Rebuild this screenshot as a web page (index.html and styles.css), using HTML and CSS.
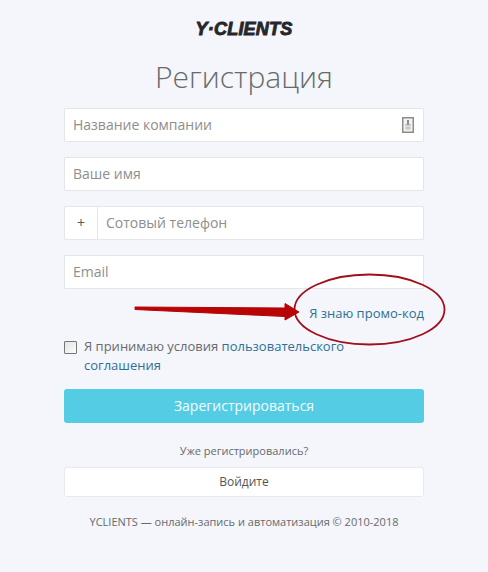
FILE: index.html
```html
<!DOCTYPE html>
<html lang="ru">
<head>
<meta charset="utf-8">
<title>Регистрация</title>
<link rel="stylesheet" href="styles.css">
</head>
<body>
<main class="page">
  <div class="logo">Y·CLIENTS</div>
  <h1 class="title">Регистрация</h1>
  <form class="form">
    <div class="field">
      <span class="placeholder">Название компании</span>
      <svg class="field-icon" width="12" height="16" viewBox="0 0 12 16" aria-hidden="true">
        <rect x="0.75" y="0.75" width="10.5" height="14.5" fill="#f2f2f2" stroke="#8c8c8c" stroke-width="1.5"/>
        <rect x="5" y="3" width="2" height="4" fill="#8c8c8c"/>
        <rect x="3.500" y="7" width="5" height="1.500" fill="#a8a8a8"/>
        <rect x="3.500" y="9.500" width="5" height="3" fill="#c8c8c8"/>
      </svg>
    </div>
    <div class="field"><span class="placeholder">Ваше имя</span></div>
    <div class="field phone">
      <span class="prefix">+</span>
      <span class="placeholder">Сотовый телефон</span>
    </div>
    <div class="field"><span class="placeholder">Email</span></div>
  </form>
  <div class="promo"><a class="link" href="#">Я знаю промо-код</a></div>
  <div class="terms">
    <span class="checkbox"></span>
    <p class="terms-text">Я принимаю условия <a class="link" href="#">пользовательского соглашения</a></p>
  </div>
  <div class="submit">Зарегистрироваться</div>
  <p class="already">Уже регистрировались?</p>
  <div class="login">Войдите</div>
  <p class="copyright">YCLIENTS — онлайн-запись и автоматизация © 2010-2018</p>

  <svg class="annotation" width="488" height="572" viewBox="0 0 488 572" aria-hidden="true">
    <ellipse cx="369.500" cy="309.500" rx="75" ry="35" fill="none" stroke="#a0101a" stroke-width="1.800"/>
    <path d="M135 307 L135 309.500 L285 316.500 L285 320 L299 312 L285 303.500 L285 308 Z" fill="#b80404" stroke="#b80404" stroke-width="1" stroke-linejoin="round"/>
  </svg>
</main>
</body>
</html>
```
FILE: styles.css
```css
* { box-sizing: border-box; }
html, body { margin: 0; padding: 0; }
body {
  background: #f4f6fb;
  font-family: "Open Sans", sans-serif;
  color: #676a6c;
  width: 488px;
  height: 572px;
  overflow: hidden;
}
.page {
  position: relative;
  width: 488px;
  height: 572px;
  padding: 18px 64px 0;
}
.logo {
  height: 22px;
  line-height: 22px;
  text-align: center;
  font-family: "Liberation Sans", sans-serif;
  font-weight: 700;
  font-style: italic;
  font-size: 18px;
  letter-spacing: 0.2px;
  color: #26262b;
  -webkit-text-stroke: 0.9px #26262b;
}
.title {
  margin: 16px 0 0;
  height: 41px;
  line-height: 41px;
  text-align: center;
  font-weight: 300;
  font-size: 30px;
  color: #676a6c;
}
.form {
  margin-top: 11px;
  display: flex;
  flex-direction: column;
  gap: 15px;
}
.field {
  height: 34px;
  background: #fff;
  border: 1px solid #e5e6e7;
  border-radius: 1px;
  display: flex;
  align-items: center;
  justify-content: space-between;
  padding: 0 15px 2px 8px;
  font-size: 14px;
}
.placeholder { color: #8e8e8e; }
.field-icon { flex: none; margin: 2px -6px 0 0; }
.phone { justify-content: flex-start; padding: 0 0 2px; }
.prefix {
  width: 33px;
  height: 32px;
  margin: 0 8px -2px 0;
  padding-bottom: 2px;
  display: flex;
  align-items: center;
  justify-content: center;
  border-right: 1px solid #e5e6e7;
  color: #555;
}
.promo {
  margin-top: 14px;
  height: 20px;
  line-height: 20px;
  text-align: right;
  font-size: 13px;
}
.link { color: #2f6f95; text-decoration: none; }
.terms {
  margin-top: 14px;
  display: flex;
  gap: 7px;
}
.checkbox {
  flex: none;
  width: 13px;
  height: 13px;
  margin-top: 4px;
  border: 1px solid #767676;
  border-radius: 1px;
  background: linear-gradient(135deg, #e4e4e4, #fbfbfb);
}
.terms-text {
  margin: 0;
  font-size: 13px;
  line-height: 19px;
  color: #676a6c;
}
.submit {
  margin-top: 14px;
  height: 34px;
  line-height: 33px;
  text-align: center;
  background: #54cde4;
  border-radius: 3px;
  color: #f4fcfe;
  font-size: 14px;
}
.already {
  margin: 19px 0 0;
  height: 17px;
  line-height: 17px;
  text-align: center;
  font-size: 11px;
}
.login {
  margin-top: 8px;
  height: 30px;
  line-height: 28px;
  text-align: center;
  background: #fff;
  border: 1px solid #e7eaec;
  border-radius: 3px;
  font-size: 12px;
  color: #555;
}
.copyright {
  margin: 16px -10px 0;
  height: 17px;
  line-height: 17px;
  text-align: center;
  font-size: 11px;
}
.annotation {
  position: absolute;
  left: 0;
  top: 0;
  pointer-events: none;
}
```
